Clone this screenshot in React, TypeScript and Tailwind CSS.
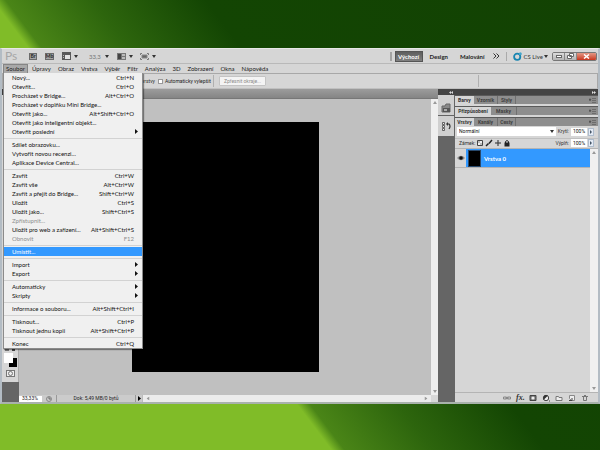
import type { ReactNode } from "react";

type Entry = { label: string; keys?: string; sub?: boolean; off?: boolean; active?: boolean };

const groups: Entry[][] = [
  [
    { label: "Nový...", keys: "Ctrl+N" },
    { label: "Otevřít...", keys: "Ctrl+O" },
    { label: "Procházet v Bridge...", keys: "Alt+Ctrl+O" },
    { label: "Procházet v doplňku Mini Bridge..." },
    { label: "Otevřít jako...", keys: "Alt+Shift+Ctrl+O" },
    { label: "Otevřít jako inteligentní objekt..." },
    { label: "Otevřít poslední", sub: true },
  ],
  [
    { label: "Sdílet obrazovku..." },
    { label: "Vytvořit novou recenzi..." },
    { label: "Aplikace Device Central..." },
  ],
  [
    { label: "Zavřít", keys: "Ctrl+W" },
    { label: "Zavřít vše", keys: "Alt+Ctrl+W" },
    { label: "Zavřít a přejít do Bridge...", keys: "Shift+Ctrl+W" },
    { label: "Uložit", keys: "Ctrl+S" },
    { label: "Uložit jako...", keys: "Shift+Ctrl+S" },
    { label: "Zpřístupnit...", off: true },
    { label: "Uložit pro web a zařízení...", keys: "Alt+Shift+Ctrl+S" },
    { label: "Obnovit", keys: "F12", off: true },
  ],
  [{ label: "Umístit...", active: true }],
  [
    { label: "Import", sub: true },
    { label: "Export", sub: true },
  ],
  [
    { label: "Automaticky", sub: true },
    { label: "Skripty", sub: true },
  ],
  [{ label: "Informace o souboru...", keys: "Alt+Shift+Ctrl+I" }],
  [
    { label: "Tisknout...", keys: "Ctrl+P" },
    { label: "Tisknout jednu kopii", keys: "Alt+Shift+Ctrl+P" },
  ],
  [{ label: "Konec", keys: "Ctrl+Q" }],
];

const menus = ["Úpravy", "Obraz", "Vrstva", "Výběr", "Filtr", "Analýza", "3D", "Zobrazení", "Okna", "Nápověda"];

function Caret() {
  return (
    <svg viewBox="0 0 4 3" className="h-[3px] w-1 shrink-0" aria-hidden="true">
      <path d="M0 0h4L2 3z" fill="#333" />
    </svg>
  );
}

function Tri() {
  return (
    <svg viewBox="0 0 3 5" className="h-[5px] w-[3px] shrink-0" aria-hidden="true">
      <path d="M0 0l3 2.500L0 5z" fill="currentColor" />
    </svg>
  );
}

function ScrollMark({ down }: { down?: boolean }) {
  return (
    <svg viewBox="0 0 4 3" className={down ? "h-[3px] w-1 rotate-180" : "h-[3px] w-1"} aria-hidden="true">
      <path d="M0 3l2-3 2 3z" fill="#999" />
    </svg>
  );
}

function FileMenu() {
  return (
    <div role="menu" className="absolute top-full left-0 z-10 w-[140px] border border-t-0 border-[#8b8b8b] bg-[#f0f0f0] shadow-[1px_1px_1px_#0006]">
      {groups.map((group, i) => (
        <div key={i}>
          {i > 0 && (
            <div className="flex h-1 items-center">
              <div className="h-px w-full bg-[#d2d2d2]" />
            </div>
          )}
          {group.map((e) => (
            <button
              key={e.label}
              role="menuitem"
              disabled={e.off}
              className={
                "flex h-[9px] w-full items-center justify-between pl-2 pr-1 whitespace-nowrap " +
                (e.active ? "bg-[#3399ff] text-white" : e.off ? "text-[#8e8e8e]" : "text-[#111]")
              }
            >
              <span>{e.label}</span>
              {e.sub ? <Tri /> : <span className="pr-1">{e.keys}</span>}
            </button>
          ))}
        </div>
      ))}
    </div>
  );
}

function TitleBar() {
  return (
    <div className="flex h-[15px] shrink-0 items-center border-b border-[#b9b9b9] pl-[3px]">
      <span className="w-6 text-[12px] leading-3 text-[#a6a6a6]">Ps</span>
      <button aria-label="Bridge" className="flex h-[7px] w-2 items-center justify-center border border-[#6b6b6b] bg-[#a5a5a5] text-[5px] font-bold text-[#222]">Br</button>
      <button aria-label="Mini Bridge" className="ml-2 flex h-[7px] w-[9px] items-center justify-center border border-[#6b6b6b] bg-[#a5a5a5] text-[5px] font-bold text-[#222]">Mb</button>
      <button aria-label="Zobrazit doplňky" className="ml-2 flex items-center gap-[3px]">
        <svg viewBox="0 0 9 8" className="h-2 w-[9px]">
          <path d="M0 0h9v8H0z" fill="#5a5a5a" />
          <path d="M3 3h5v4H3z" fill="#e4e4e4" />
          <path d="M1 3h1v1H1zM1 5h1v1H1z" fill="#bbb" />
        </svg>
        <Caret />
      </button>
      <button className="ml-[11px] flex items-center gap-1 text-[#777]">33,3<Caret /></button>
      <button aria-label="Uspořádat dokumenty" className="ml-2 flex items-center gap-[3px]">
        <svg viewBox="0 0 9 7" className="h-[7px] w-[9px]">
          <path d="M0 0h9v7H0z" fill="#777" />
          <path d="M1 1h3v5H1z" fill="#444" />
          <path d="M5 1h3v2H5zM5 4h3v2H5z" fill="#bbb" />
        </svg>
        <Caret />
      </button>
      <button aria-label="Režim obrazovky" className="ml-[7px] flex items-center gap-[3px]">
        <svg viewBox="0 0 9 7" className="h-[7px] w-[9px]">
          <path d="M.5 2V.5H2M7 .5h1.500V2M8.500 5v1.500H7M2 6.500H.5V5" fill="none" stroke="#777" />
          <path d="M2 2h5v3H2z" fill="#666" stroke="#888" />
        </svg>
        <Caret />
      </button>
      <div className="ml-auto flex h-full items-center">
        <div className="mr-[3px] h-[9px] w-[2px] bg-[#a3a3a3]" />
        <button className="h-[11px] w-7 border border-[#555] bg-linear-to-b from-[#5e5e5e] to-[#808080] font-bold text-white">Výchozí</button>
        <button className="ml-[7px] font-bold text-[#222]">Design</button>
        <button className="ml-3 font-bold text-[#222]">Malování</button>
        <button aria-label="Další plochy" className="ml-[9px]">
          <svg viewBox="0 0 7 6" className="h-[6px] w-[7px]">
            <path d="M.5.5L3 3 .5 5.500M3.500.5L6 3 3.500 5.500" fill="none" stroke="#333" />
          </svg>
        </button>
        <div className="mx-[6px] h-[9px] w-px bg-[#aaa]" />
        <button className="flex items-center gap-px text-[#333]">
          <svg viewBox="0 0 9 9" className="h-[9px] w-[9px]">
            <circle cx="4.200" cy="4.800" r="3.100" fill="none" stroke="#1684b0" strokeWidth="1.800" />
            <circle cx="7.300" cy="1.700" r="1.500" fill="#45a5c9" />
          </svg>
          CS Live
          <Caret />
        </button>
        <div className="mr-[1px] ml-1 flex h-[9px] w-[45px] overflow-hidden rounded-[2px] border border-[#777]">
          <button aria-label="Minimalizovat" className="flex w-3 items-center justify-center border-r border-[#888] bg-linear-to-b from-[#ddd] to-[#b4b4b4]">
            <span className="h-[3px] w-[6px] border border-[#666] bg-white" />
          </button>
          <button aria-label="Obnovit okno" className="flex w-3 items-center justify-center border-r border-[#888] bg-linear-to-b from-[#ddd] to-[#b4b4b4]">
            <svg viewBox="0 0 7 6" className="h-[6px] w-[7px]">
              <path d="M2.500.5h4v3h-4zM.5 2.500h4v3h-4z" fill="#fff" stroke="#666" />
            </svg>
          </button>
          <button aria-label="Zavřít okno" className="flex flex-1 items-center justify-center bg-linear-to-b from-[#e29684] to-[#c8331a]">
            <svg viewBox="0 0 7 5" className="h-[5px] w-[7px]">
              <path d="M1 .5l5 4M6 .5l-5 4" stroke="#fff" strokeWidth="1.500" />
            </svg>
          </button>
        </div>
      </div>
    </div>
  );
}

function OptionsBar() {
  return (
    <div className="flex h-4 shrink-0 items-center border border-[#a8a8a8] border-b-[#c0c0c0] font-[Roboto,sans-serif] text-[5px] text-[#333]">
      <div className="flex w-[210px] items-center justify-end gap-[3px] pr-[2px] whitespace-nowrap">
        <span>vrstvy</span>
        <label className="flex items-center gap-[2px] text-[#222]">
          <input type="checkbox" className="h-[5px] w-[5px] appearance-none border border-[#999] bg-white" />
          Automaticky vylepšit
        </label>
      </div>
      <div className="mr-[5px] h-3 w-px bg-[#b0b0b0]" />
      <button className="h-[10px] w-[47px] rounded-[1px] border border-[#c4c4c4] bg-[#f4f4f4] leading-2 whitespace-nowrap text-[#8c8c8c]">Zpřesnit okraje...</button>
      <div className="ml-auto mr-[118px] h-3 w-px bg-[#b0b0b0]" />
    </div>
  );
}

function Tools() {
  return (
    <div className="flex w-[17px] shrink-0 flex-col bg-[#656565]">
      <div className="h-[6px] bg-[#3b3b3b]" />
      <div className="flex flex-1 flex-col items-center justify-end border-r border-[#aaa] bg-[#d6d6d6] pb-[5px]">
        <div className="flex w-full items-center justify-between px-[3px] pb-[2px]">
          <span className="h-[3px] w-1 bg-[#777]" />
          <span className="h-[2px] w-[3px] bg-[#444]" />
        </div>
        <div className="grid w-full grid-cols-[2px_5px_4px_4px] grid-rows-[5px_5px_4px]">
          <button aria-label="Barva pozadí" className="col-span-2 col-start-3 row-span-2 row-start-2 bg-black" />
          <button aria-label="Barva popředí" className="col-span-2 col-start-2 row-span-2 row-start-1 bg-white" />
        </div>
        <button aria-label="Rychlá maska" className="mt-[3px] flex h-[7px] w-[9px] items-center justify-center border border-[#777] bg-[#eee]">
          <span className="h-[5px] w-[5px] rounded-full border border-[#777]" />
        </button>
      </div>
      <div className="h-5" />
    </div>
  );
}

function Document() {
  return (
    <div className="flex min-w-0 flex-1 flex-col">
      <div className="h-[10px] border-b border-[#777] bg-linear-to-b from-[#9c9c9c] to-[#858585]" />
      <div className="flex min-h-0 flex-1">
        <div className="flex min-w-0 flex-1 items-center justify-center bg-[#c0c0c0]">
          <div className="h-[250px] w-[187px] bg-black" />
        </div>
        <div className="flex w-[7px] flex-col items-center justify-between bg-[#efefef] py-[2px]">
          <ScrollMark />
          <ScrollMark down />
        </div>
      </div>
      <div className="flex h-[7px] items-center bg-[#cbcbcb] font-[Roboto,sans-serif] text-[5px] text-[#222]">
        <input aria-label="Měřítko" defaultValue="33,33%" className="h-[6px] w-[23px] bg-white pl-[3px]" />
        <svg viewBox="0 0 6 6" className="mx-1 h-[6px] w-[6px]">
          <circle cx="3" cy="3" r="2.500" fill="#ccc" stroke="#777" strokeWidth=".8" />
          <path d="M3 1v2h2" fill="none" stroke="#555" strokeWidth=".8" />
        </svg>
        <div className="flex h-full w-20 items-center justify-center border-x border-[#999] leading-[7px]">Dok: 5,49 MB/0 bytů</div>
        <button aria-label="Informace" className="flex w-[6px] justify-center text-black"><Tri /></button>
        <div className="flex h-full flex-1 items-center justify-between border-l border-[#bbb] bg-[#ececec] px-[3px]">
          <span className="-rotate-90"><ScrollMark /></span>
          <span className="rotate-90"><ScrollMark /></span>
        </div>
        <div className="h-full w-[7px] bg-[#d8d8d8]" />
      </div>
    </div>
  );
}

function Tabs({ names, widths }: { names: string[]; widths: string[] }) {
  return (
    <div role="tablist" className="flex h-[9px] shrink-0 border-t border-[#5a5a5a] bg-[#8e8e8e]">
      {names.map((n, i) => (
        <button
          key={n}
          role="tab"
          aria-selected={i === 0}
          className={
            widths[i] + " flex items-center justify-center font-bold whitespace-nowrap " +
            (i === 0 ? "bg-[#d6d6d6] text-[#333]" : "border-r border-[#707070] text-[#3f3f3f]")
          }
        >
          {n}
        </button>
      ))}
      <button aria-label="Nabídka panelu" className="ml-auto flex items-center gap-px pr-[2px]">
        <svg viewBox="0 0 7 5" className="h-[5px] w-[7px]">
          <path d="M0 1h2L1 3zM3 .5h4M3 2.500h4M3 4.500h4" fill="#444" stroke="#555" strokeWidth=".6" />
        </svg>
      </button>
    </div>
  );
}

function Percent({ id, label }: { id: string; label: string }) {
  return (
    <div className="ml-auto flex items-center">
      <label htmlFor={id} className="pr-[2px]">{label}</label>
      <input id={id} defaultValue="100%" className="h-2 w-4 bg-white pl-[2px] text-[#111]" />
      <button aria-label={label} className="mr-[2px] ml-px flex h-2 w-[6px] items-center justify-center border border-[#aebccc] bg-[#e4ebf5] text-[#456]">
        <svg viewBox="0 0 2 4" className="h-1 w-[2px]"><path d="M0 0l2 2-2 2z" fill="currentColor" /></svg>
      </button>
    </div>
  );
}

function Icon({ label, children }: { label: string; children: ReactNode }) {
  return (
    <button aria-label={label}>
      <svg viewBox="0 0 8 8" className="h-2 w-2" fill="none" stroke="#444">{children}</svg>
    </button>
  );
}

function Panels() {
  return (
    <div className="flex w-[160px] shrink-0 flex-col bg-[#656565] font-[Roboto,sans-serif]">
      <div className="flex h-[6px] shrink-0 items-center justify-between bg-[#444] pl-[11px] pr-[2px]">
        <svg viewBox="0 0 4 3" className="h-[3px] w-1"><path d="M2 0v3L0 1.500zM4 0v3L2 1.500z" fill="#ddd" /></svg>
        <svg viewBox="0 0 4 3" className="h-[3px] w-1"><path d="M0 0v3l2-1.500zM2 0v3l2-1.500z" fill="#ddd" /></svg>
      </div>
      <div className="flex min-h-0 flex-1">
        <div className="w-[17px] shrink-0">
          <div className="mb-px flex h-5 w-4 items-end justify-center bg-[#d0d0d0] pb-[2px]">
            <button aria-label="Mini Bridge">
              <svg viewBox="0 0 10 10" className="h-[10px] w-[10px]">
                <path d="M1 3h3l1-2h4v8H1z" fill="#888" stroke="#666" />
                <path d="M2 5h7v4H2z" fill="#555" />
                <path d="M3 6h3v2H3z" fill="#aaa" />
              </svg>
            </button>
          </div>
          <div className="flex h-5 w-4 items-center justify-center bg-[#d0d0d0]">
            <button aria-label="Historie">
              <svg viewBox="0 0 9 9" className="h-[9px] w-[9px]">
                <path d="M.5.5h2v2h-2zM.5 3.500h2v2h-2zM.5 6.500h2v2h-2z" fill="#eee" stroke="#444" strokeWidth=".8" />
                <path d="M5 2h2q2 2 0 5" fill="none" stroke="#333" strokeWidth="1.200" />
                <path d="M4 2l2-2v4z" fill="#333" />
              </svg>
            </button>
          </div>
        </div>
        <div className="flex min-w-0 flex-1 flex-col bg-[#d6d6d6] text-[5px] text-[#333]">
          <Tabs names={["Barvy", "Vzorník", "Styly"]} widths={["w-[19px]", "w-6", "w-[18px]"]} />
          <div className="h-[2px] shrink-0" />
          <Tabs names={["Přizpůsobení", "Masky"]} widths={["w-9", "w-[26px]"]} />
          <div className="h-[2px] shrink-0" />
          <Tabs names={["Vrstvy", "Kanály", "Cesty"]} widths={["w-[19px]", "w-6", "w-[18px]"]} />
          <div className="mt-px flex h-[9px] items-center px-[2px]">
            <div className="flex h-[9px] w-[99px] items-center bg-white pr-[2px]">
              <select aria-label="Režim prolnutí" className="h-[9px] flex-1 appearance-none bg-white pl-[2px] leading-[9px] text-[#111]">
                <option>Normální</option>
              </select>
              <Caret />
            </div>
            <Percent id="opacity" label="Krytí:" />
          </div>
          <div className="mt-[2px] mb-px flex h-[9px] items-center border-t border-[#c0c0c0] px-[2px]">
            <span className="w-[19px] pl-[2px]">Zámek:</span>
            <div className="flex items-center gap-px">
              <Icon label="Zamknout průhlednost">
                <path d="M1.500 1.500h5v5h-5z" fill="#eee" />
                <path d="M2 2h2v2H2zM4 4h2v2H4z" fill="#bbb" stroke="none" />
              </Icon>
              <Icon label="Zamknout obraz"><path d="M7 1L4 4.500M3.500 4.500L1 7" strokeWidth="1.500" stroke="#222" /></Icon>
              <Icon label="Zamknout polohu"><path d="M4 1v6M1 4h6" stroke="#333" /><path d="M3 2h2M3 6h2M2 3v2M6 3v2" stroke="#777" strokeWidth=".6" /></Icon>
              <Icon label="Zamknout vše">
                <path d="M2.500 4V2.500q1.500-2 3 0V4" stroke="#222" />
                <path d="M1.500 3.500h5v4h-5z" fill="#222" stroke="none" />
              </Icon>
            </div>
            <Percent id="fill" label="Výplň:" />
          </div>
          <div className="flex min-h-0 flex-1 border-y border-[#b4b4b4]">
            <div className="min-w-0 flex-1">
              <div className="flex h-[19px] items-center border-b border-[#b4b4b4]">
                <button aria-label="Viditelnost vrstvy" className="flex w-[11px] justify-center">
                  <svg viewBox="0 0 8 6" className="h-[6px] w-2">
                    <path d="M0 3q4-4.500 8 0-4 4.500-8 0z" fill="#888" />
                    <circle cx="4" cy="3" r="1.800" fill="#111" />
                  </svg>
                </button>
                <button className="flex h-full flex-1 items-center gap-[3px] bg-[#3399ff] pl-[2px] font-[Lato,sans-serif] text-[6px] font-bold text-white">
                  <span className="h-[17px] w-[13px] border border-[#27486b] bg-black" />
                  Vrstva 0
                </button>
              </div>
            </div>
            <div className="flex w-2 flex-col items-center justify-between bg-[#f0f0f0] py-[2px]">
              <ScrollMark />
              <ScrollMark down />
            </div>
          </div>
          <div className="flex h-[9px] shrink-0 items-center justify-end gap-[5px] pr-[9px]">
            <Icon label="Propojit vrstvy">
              <path d="M.5 3h3v2h-3zM4.500 3h3v2h-3zM2 4h4" stroke="#888" />
            </Icon>
            <button aria-label="Styl vrstvy" className="w-2 font-['Liberation_Serif',serif] text-[8px] leading-2 font-bold text-[#333] italic">fx.</button>
            <Icon label="Maska vrstvy">
              <path d="M1 1.500h6v5H1z" fill="#777" />
              <circle cx="4" cy="4" r="1.600" fill="#eee" stroke="none" />
            </Icon>
            <Icon label="Vrstva úprav">
              <circle cx="4" cy="4" r="2.700" fill="#eee" />
              <path d="M1.500 6L6 1.500Q2-.5 1.300 4z" fill="#333" stroke="none" />
              <path d="M7 7h1" />
            </Icon>
            <Icon label="Nová skupina"><path d="M1 2.500h2.500l.5 1h3v3H1z" fill="#eee" stroke="#777" /></Icon>
            <Icon label="Nová vrstva"><path d="M1.500 1.500h5v5h-3l-2-2z" fill="#eee" stroke="#888" /><path d="M1 6.500h3V4" /></Icon>
            <Icon label="Odstranit vrstvu"><path d="M1 2.500h6M2.500 3v3.500h3V3M3 1.500h2" stroke="#777" /></Icon>
          </div>
        </div>
      </div>
    </div>
  );
}

export default function App() {
  return (
    <div className="flex h-screen flex-col overflow-hidden bg-[linear-gradient(53deg,#80bc28_0%,#80bc28_35.3%,#4a8517_36.7%,#2d650d_46%,#134503_58%,#124203_100%)] pt-12 pb-[46px] font-[Lato,'Open_Sans',sans-serif] text-[6px] leading-[9px]">
      <div className="flex min-h-0 flex-1 flex-col border-x-2 border-t border-b-2 border-x-[#b3bcc4] border-t-[#e8e8e8] border-b-[#a9b2ac] bg-[#d6d6d6]">
        <TitleBar />
        <div className="flex h-[9px] shrink-0 items-center pl-px text-[#222]">
          <div className="relative">
            <button className="h-[9px] w-[25px] border border-b-0 border-[#858585] bg-[#a8a8a8] leading-[7px]">Soubor</button>
            <FileMenu />
          </div>
          {menus.map((m) => (
            <button key={m} className="pr-[3px] pl-1">{m}</button>
          ))}
        </div>
        <OptionsBar />
        <div className="flex min-h-0 flex-1">
          <Tools />
          <Document />
          <Panels />
        </div>
      </div>
    </div>
  );
}
